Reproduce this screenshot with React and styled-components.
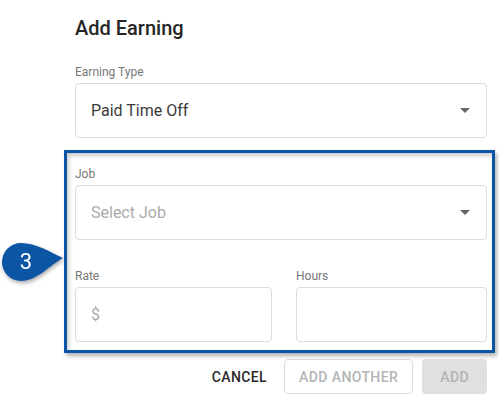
import React from "react";
import styled, { createGlobalStyle } from "styled-components";

const GlobalStyle = createGlobalStyle`
  html, body {
    margin: 0;
    padding: 0;
    background: #ffffff;
    font-family: Roboto, "Liberation Sans", Arial, sans-serif;
  }
  * { box-sizing: border-box; }
`;

const colors = {
  blue: "#0b55a4",
  border: "#dcdcdc",
  label: "#777777",
  text: "#3a3a3a",
  placeholder: "#ababab",
};

const Page = styled.div`
  position: relative;
  width: 499px;
  height: 406px;
  padding: 16px 12px 0 75px;
  overflow: hidden;
`;

const Title = styled.h2`
  margin: 0 0 24px;
  font-size: 20px;
  line-height: 24px;
  font-weight: 500;
  color: #262626;
`;

const Field = styled.div`
  display: flex;
  flex-direction: column;
  margin-bottom: ${(p) => (p.last ? "0" : "28px")};
`;

const Label = styled.label`
  font-size: 12px;
  line-height: 16px;
  color: ${colors.label};
  margin-bottom: 3px;
`;

const Box = styled.div`
  display: flex;
  align-items: center;
  justify-content: space-between;
  height: 55px;
  padding: 0 16px 0 15px;
  border: 1px solid ${colors.border};
  border-radius: 4px;
  background: #fff;
  font-size: 16px;
  color: ${(p) => (p.placeholder ? colors.placeholder : colors.text)};
`;

const Caret = styled.span`
  width: 0;
  height: 0;
  border-left: 5px solid transparent;
  border-right: 5px solid transparent;
  border-top: 5px solid #666666;
`;

const Highlight = styled.div`
  position: relative;
`;

const Frame = styled.div`
  position: absolute;
  top: -16px;
  left: -11px;
  right: -8px;
  bottom: -11px;
  border: 3px solid ${colors.blue};
  box-shadow: 2px 3px 4px rgba(0, 0, 0, 0.3),
    inset 2px 3px 4px rgba(0, 0, 0, 0.2);
  pointer-events: none;
`;

const Row = styled.div`
  display: grid;
  grid-template-columns: 197px 1fr;
  column-gap: 24px;
`;

const Badge = styled.div`
  position: absolute;
  left: -75px;
  top: 74px;
  width: 66px;
  height: 44px;
  filter: drop-shadow(1px 2px 2px rgba(0, 0, 0, 0.35));
`;

const BadgeNum = styled.span`
  position: absolute;
  left: 14px;
  top: 0;
  width: 24px;
  line-height: 43px;
  text-align: center;
  color: #fff;
  font-size: 22px;
  font-weight: 400;
`;

const Actions = styled.div`
  display: flex;
  justify-content: flex-end;
  align-items: center;
  margin-top: 17px;
`;

const Button = styled.button`
  height: 35px;
  margin-left: ${(p) => p.gap || 0}px;
  padding: 0 ${(p) => p.pad || 15}px;
  font-family: inherit;
  font-size: 14px;
  font-weight: 500;
  letter-spacing: 0.4px;
  border-radius: 4px;
  text-transform: uppercase;
  border: 1px solid ${(p) => (p.variant === "outline" ? colors.border : "transparent")};
  background: ${(p) => (p.variant === "filled" ? "#e0e0e0" : "#fff")};
  color: ${(p) => (p.variant === "text" ? "#2a2a2a" : "#b4b4b4")};
`;

export default function App() {
  return (
    <>
      <GlobalStyle />
      <Page>
        <Title>Add Earning</Title>
        <Field>
          <Label>Earning Type</Label>
          <Box>
            Paid Time Off
            <Caret />
          </Box>
        </Field>
        <Highlight>
          <Frame />
          <Badge>
            <svg width="66" height="44" viewBox="0 0 66 44">
              <path
                d="M21 3 C36 3 50 12 63 18 C50 25 37 41 21 41 A19 19 0 0 1 21 3 Z"
                fill={colors.blue}
              />
            </svg>
            <BadgeNum>3</BadgeNum>
          </Badge>
          <Field>
            <Label>Job</Label>
            <Box placeholder>
              Select Job
              <Caret />
            </Box>
          </Field>
          <Row>
            <Field last>
              <Label>Rate</Label>
              <Box placeholder>$</Box>
            </Field>
            <Field last>
              <Label>Hours</Label>
              <Box />
            </Field>
          </Row>
        </Highlight>
        <Actions>
          <Button variant="text" pad={8}>Cancel</Button>
          <Button variant="outline" pad={14} gap={8}>Add Another</Button>
          <Button variant="filled" pad={17} gap={9}>Add</Button>
        </Actions>
      </Page>
    </>
  );
}
